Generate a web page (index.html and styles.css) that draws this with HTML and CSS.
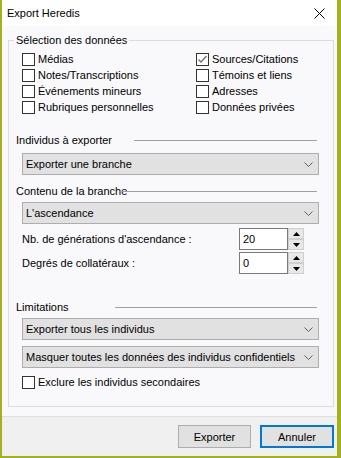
FILE: index.html
```html
<!DOCTYPE html>
<html lang="fr">
<head>
    <meta charset="UTF-8">
    <meta name="viewport" content="width=device-width, initial-scale=1.0">
    <title>Export Heredis</title>
    <link rel="stylesheet" href="styles.css">
</head>
<body>
    <div class="window">
        <header class="titlebar">
            <span class="title">Export Heredis</span>
            <svg class="close" width="11" height="11" viewBox="0 0 11 11">
                <path d="M0.5 0.5 L10.5 10.5 M10.5 0.5 L0.5 10.5" stroke="#000" stroke-width="1" fill="none"/>
            </svg>
        </header>

        <main class="content">
            <fieldset class="group">
                <legend>Sélection des données</legend>

                <div class="checks">
                    <label class="check"><span class="box"></span>Médias</label>
                    <label class="check"><span class="box checked"><svg width="11" height="11" viewBox="0 0 11 11"><path d="M1.5 5.5 L4 8 L9.5 2" stroke="#707070" stroke-width="1.3" fill="none"/></svg></span>Sources/Citations</label>
                    <label class="check"><span class="box"></span>Notes/Transcriptions</label>
                    <label class="check"><span class="box"></span>Témoins et liens</label>
                    <label class="check"><span class="box"></span>Événements mineurs</label>
                    <label class="check"><span class="box"></span>Adresses</label>
                    <label class="check"><span class="box"></span>Rubriques personnelles</label>
                    <label class="check"><span class="box"></span>Données privées</label>
                </div>

                <div class="section-head head-individus">
                    <span class="section-label">Individus à exporter</span>
                    <span class="rule"></span>
                </div>
                <div class="select sel-1">
                    <span>Exporter une branche</span>
                    <svg class="chevron" width="9" height="5" viewBox="0 0 9 5"><path d="M0.5 0.5 L4.5 4.5 L8.5 0.5" stroke="#606060" fill="none"/></svg>
                </div>

                <div class="section-head head-contenu">
                    <span class="section-label">Contenu de la branche</span>
                    <span class="rule"></span>
                </div>
                <div class="select sel-2">
                    <span>L'ascendance</span>
                    <svg class="chevron" width="9" height="5" viewBox="0 0 9 5"><path d="M0.5 0.5 L4.5 4.5 L8.5 0.5" stroke="#606060" fill="none"/></svg>
                </div>

                <div class="spin-row row-1">
                    <span class="spin-label">Nb. de générations d'ascendance :</span>
                    <span class="spin-input">20</span>
                    <span class="spinner">
                        <span class="spin-btn"><svg width="7" height="4" viewBox="0 0 7 4"><path d="M0 4 L3.5 0 L7 4 Z" fill="#000"/></svg></span>
                        <span class="spin-btn"><svg width="7" height="4" viewBox="0 0 7 4"><path d="M0 0 L3.5 4 L7 0 Z" fill="#000"/></svg></span>
                    </span>
                </div>
                <div class="spin-row row-2">
                    <span class="spin-label">Degrés de collatéraux :</span>
                    <span class="spin-input">0</span>
                    <span class="spinner">
                        <span class="spin-btn"><svg width="7" height="4" viewBox="0 0 7 4"><path d="M0 4 L3.5 0 L7 4 Z" fill="#000"/></svg></span>
                        <span class="spin-btn"><svg width="7" height="4" viewBox="0 0 7 4"><path d="M0 0 L3.5 4 L7 0 Z" fill="#000"/></svg></span>
                    </span>
                </div>

                <div class="section-head head-limitations">
                    <span class="section-label">Limitations</span>
                    <span class="rule"></span>
                </div>
                <div class="select sel-3">
                    <span>Exporter tous les individus</span>
                    <svg class="chevron" width="9" height="5" viewBox="0 0 9 5"><path d="M0.5 0.5 L4.5 4.5 L8.5 0.5" stroke="#606060" fill="none"/></svg>
                </div>
                <div class="select sel-4">
                    <span>Masquer toutes les données des individus confidentiels</span>
                    <svg class="chevron" width="9" height="5" viewBox="0 0 9 5"><path d="M0.5 0.5 L4.5 4.5 L8.5 0.5" stroke="#606060" fill="none"/></svg>
                </div>

                <label class="check check-exclure"><span class="box"></span>Exclure les individus secondaires</label>
            </fieldset>
        </main>

        <footer class="footer">
            <button type="button" class="btn">Exporter</button>
            <button type="button" class="btn btn-default">Annuler</button>
        </footer>
    </div>
</body>
</html>
```

FILE: styles.css
```css
* { box-sizing: border-box; }
body { margin: 0; font-family: "Liberation Sans", Arial, sans-serif; font-size: 11px; color: #000; background: #fff; }

.window { width: 341px; height: 458px; display: flex; flex-direction: column; border-left: 2px solid #a3b11f; border-right: 4px solid #a3b11f; border-bottom: 2px solid #a3b11f; }

.titlebar { height: 26px; background: #fff; display: flex; align-items: center; justify-content: space-between; padding: 0 12px 0 5px; }
.title { font-size: 11px; line-height: 13px; }
.close { display: block; }

.content { flex: 1; background: #f9f9fb; padding: 8px 3px 0 6px; border-bottom: 1px solid #dfdfdf; }

.group { margin: 0; padding: 0 0 16px 0; border: 1px solid #dcdcdc; min-width: 0; }
.group legend { margin-left: 5px; padding: 0 2px; line-height: 13px; }

.checks { display: grid; grid-template-columns: 174px auto; grid-auto-rows: 16px; margin: 4px 0 0 13px; }
.check { display: flex; align-items: center; height: 16px; line-height: 13px; }
.box { width: 13px; height: 13px; border: 1px solid #333; background: #fff; margin-right: 3px; display: flex; align-items: center; justify-content: center; flex: none; }
.box svg { display: block; }

.section-head { display: flex; align-items: center; height: 13px; padding-left: 7px; line-height: 13px; }
.section-label { flex: none; white-space: nowrap; }
.rule { flex: 1; height: 1px; background: #a0a0a0; margin-right: 16px; }
.head-individus { margin-top: 19px; }
.head-individus .section-label { width: 118px; }
.head-contenu { margin-top: 10px; }
.head-contenu .section-label { width: 104px; }
.head-limitations { margin-top: 27px; }
.head-limitations .section-label { width: 99px; }

.select { height: 22px; margin: 0 14px 0 13px; background: #e1e1e1; border: 1px solid #adadad; display: flex; align-items: center; justify-content: space-between; padding: 0 5px 0 3px; white-space: nowrap; }
.chevron { display: block; flex: none; }
.sel-1 { margin-top: 6px; }
.sel-2 { margin-top: 4px; }
.sel-3 { margin-top: 4px; }
.sel-4 { margin-top: 6px; }

.spin-row { display: flex; align-items: center; height: 22px; margin: 0 29px 0 13px; }
.row-1 { margin-top: 4px; }
.row-2 { margin-top: 2px; }
.spin-label { flex: 1; }
.spin-input { width: 49px; height: 22px; background: #fff; border: 1px solid #7a7a7a; padding-left: 3px; display: flex; align-items: center; }
.spinner { width: 16px; height: 22px; display: flex; flex-direction: column; justify-content: space-between; }
.spin-btn { height: 11px; background: #e8e8e8; border: 1px solid #cfcfcf; display: flex; align-items: center; justify-content: center; }
.spin-btn svg { display: block; }

.check-exclure { margin: 6px 0 0 13px; }

.footer { height: 39px; background: #f0f0f0; display: flex; justify-content: flex-end; align-items: flex-start; gap: 9px; padding: 8px 3px 0 0; }
.btn { width: 73px; height: 23px; margin: 0; padding: 0; font-family: "Liberation Sans", Arial, sans-serif; font-size: 11px; color: #000; background: #e1e1e1; border: 1px solid #adadad; border-radius: 0; }
.btn-default { width: 74px; border: 2px solid #0078d7; }
```
